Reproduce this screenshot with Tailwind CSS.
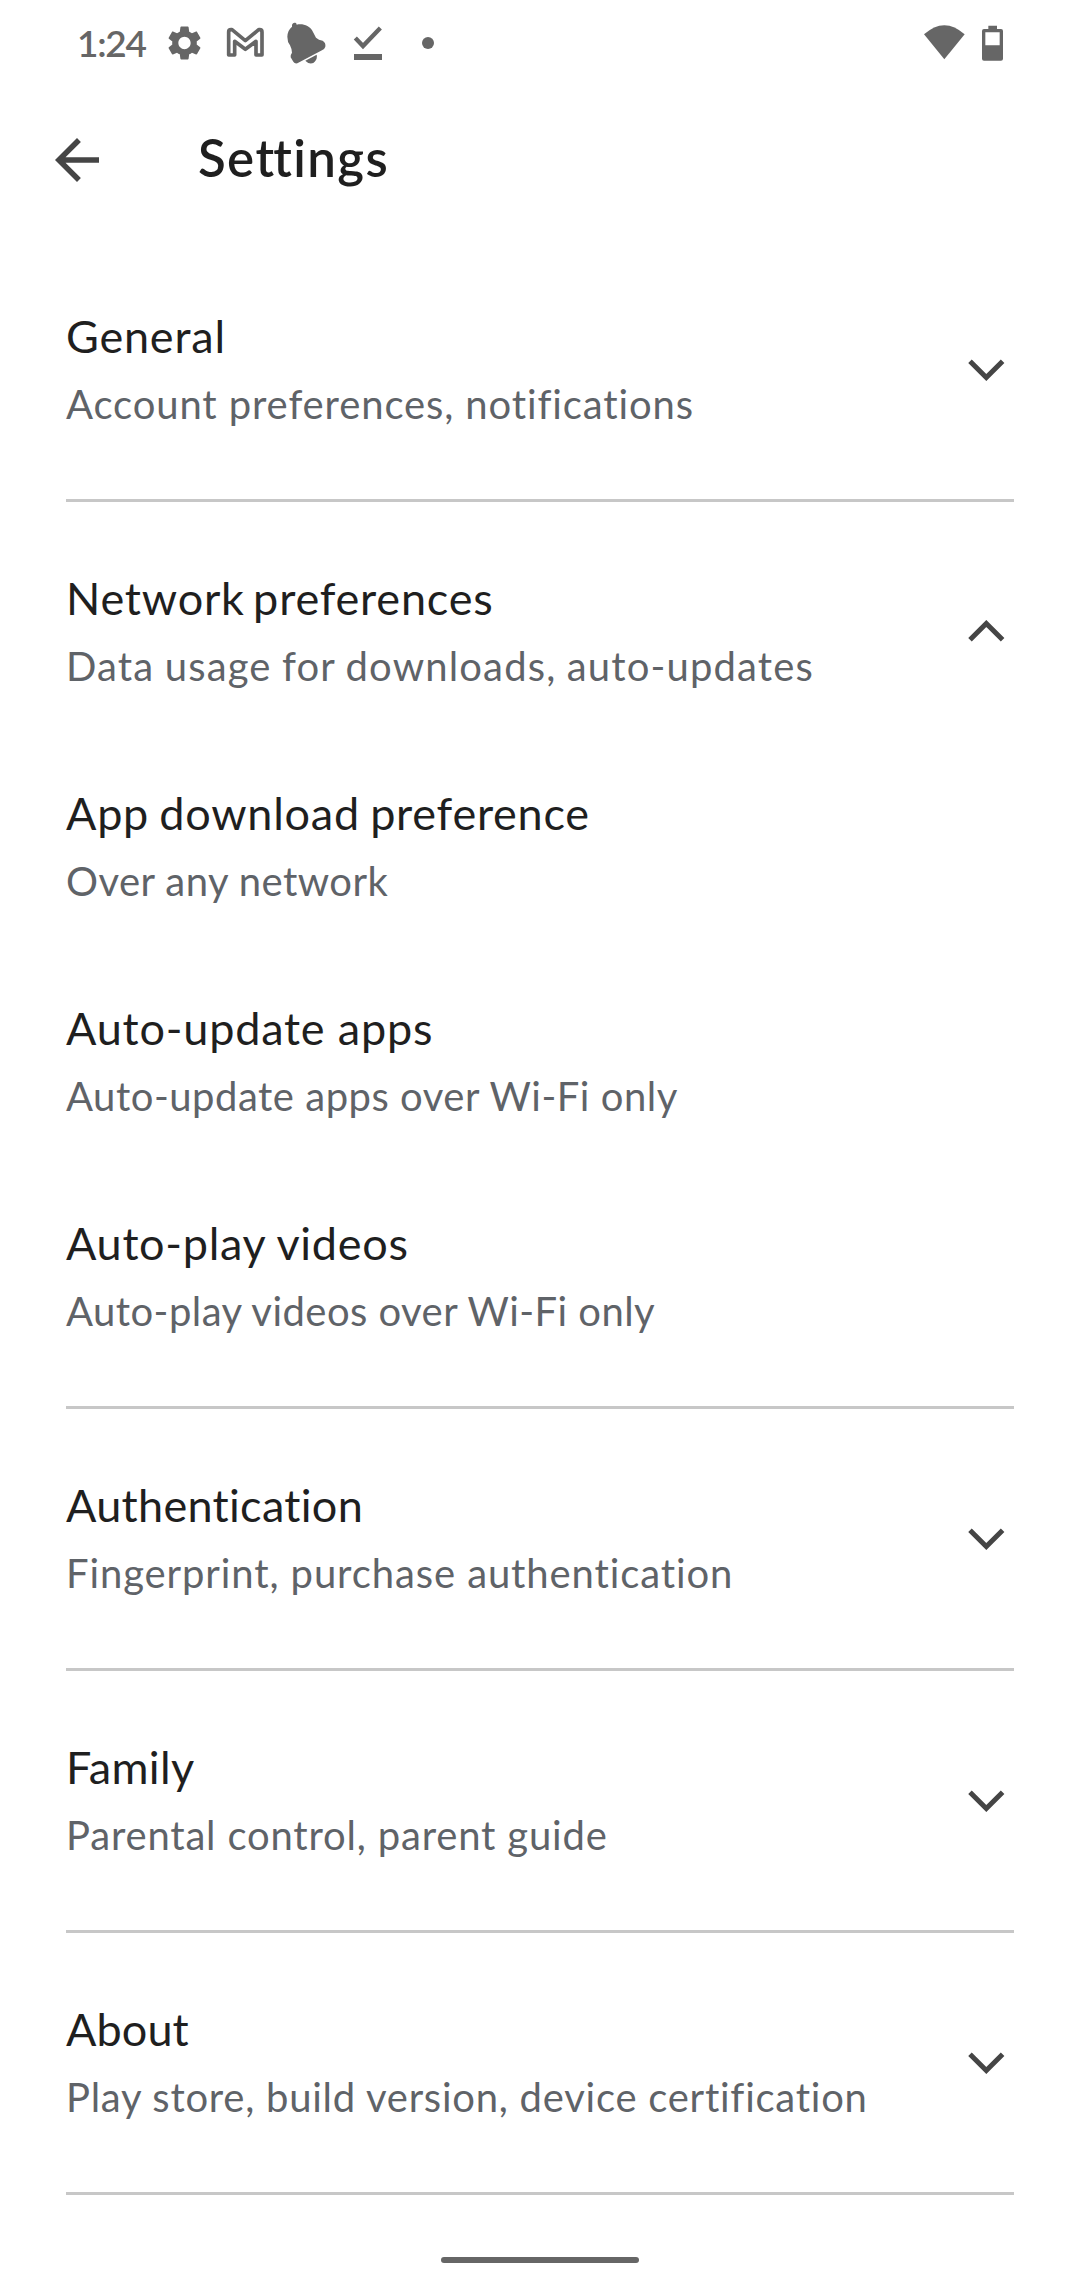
<!DOCTYPE html>
<html lang="en">
<head>
<meta charset="utf-8">
<title>Settings</title>
<script src="https://cdn.jsdelivr.net/npm/@tailwindcss/browser@4"></script>
</head>
<body class="bg-white font-['Lato','Open_Sans',sans-serif] text-[#1f1f1f]">
<div class="flex h-[2280px] w-[1080px] flex-col overflow-hidden">

  <!-- Status bar -->
  <div class="flex h-[86px] items-center pl-[77px] pr-[76px] text-[#666]">
    <span class="w-[87px] text-[37px] leading-[42px] font-semibold tracking-[-1.3px]">1:24</span>
    <svg class="h-[42px] w-[41px]" viewBox="0 0 24 24" fill="currentColor"><path d="M19.14 12.94c.04-.3.06-.61.06-.94 0-.32-.02-.64-.07-.94l2.03-1.58c.18-.14.23-.41.12-.61l-1.92-3.32c-.12-.22-.37-.29-.59-.22l-2.39.96c-.5-.38-1.03-.7-1.62-.94l-.36-2.54c-.04-.24-.24-.41-.48-.41h-3.84c-.24 0-.43.17-.47.41l-.36 2.54c-.59.24-1.13.57-1.62.94l-2.39-.96c-.22-.08-.47 0-.59.22L2.74 8.87c-.12.21-.08.47.12.61l2.03 1.58c-.05.3-.09.63-.09.94s.02.64.07.94l-2.03 1.58c-.18.14-.23.41-.12.61l1.92 3.32c.12.22.37.29.59.22l2.39-.96c.5.38 1.03.7 1.62.94l.36 2.54c.05.24.24.41.48.41h3.84c.24 0 .44-.17.47-.41l.36-2.54c.59-.24 1.13-.56 1.62-.94l2.39.96c.22.08.47 0 .59-.22l1.92-3.32c.12-.22.07-.47-.12-.61l-2.01-1.58zM12 15.6c-1.98 0-3.6-1.62-3.6-3.6s1.62-3.6 3.6-3.6 3.6 1.62 3.6 3.6-1.62 3.6-3.6 3.6z"/></svg>
    <svg class="ml-[21px] h-[42px] w-[39px]" viewBox="48 36 117 126" fill="none" stroke="currentColor" stroke-width="11" stroke-linejoin="round"><path d="M56 135V66q0-7 7-7h3l40 33 40-33h3q7 0 7 7v69H138V94L106 118 74 94v41z"/></svg>
    <svg class="ml-[22px] h-[42px] w-[39px]" viewBox="231 36 117 126" fill="currentColor"><path d="M246 50C244 36 260 36 260 44C280 40 299 48 307 62L318 83Q326 90 338 92Q348 98 346 110Q344 117 336 121L262 160Q254 162 250 155L242 142Q240 136 246 128Q246 118 240 106Q232 96 232 80Q233 60 246 50Z"/><path d="M286 152L320 134Q323 150 310 159Q297 164 286 152Z"/></svg>
    <svg class="ml-[27px] h-[42px] w-[30px]" viewBox="429 36 90 126" fill="currentColor"><path d="M436 84L459 108L511 54" fill="none" stroke="currentColor" stroke-width="13"/><path d="M432 132h84v18h-84z"/></svg>
    <svg class="ml-[38px] h-[42px] w-[14px]" viewBox="633 36 42 126" fill="currentColor"><circle cx="654" cy="99" r="18"/></svg>
    <svg class="ml-auto h-[42px] w-[43px]" viewBox="69 36 129 126" fill="currentColor"><path d="M133 148L72 73Q133 18 194 73Z"/></svg>
    <svg class="ml-[15px] h-[42px] w-[23px]" viewBox="243 36 69 126" fill="currentColor" fill-rule="evenodd"><path d="M265 57V47h26v10h12q6 0 6 6v83q0 6-6 6h-51q-6 0-6-6V63q0-6 6-6zM256 67v39h43V67z"/></svg>
  </div>

  <!-- App bar -->
  <header class="flex h-[148px] items-center pl-[44px]">
    <svg class="h-[66px] w-[66px] text-[#454545]" viewBox="0 0 24 24" fill="currentColor"><path d="M20 11H7.83l5.59-5.59L12 4l-8 8 8 8 1.41-1.41L7.83 13H20v-2z"/></svg>
    <h1 class="ml-[88px] pb-[5px] text-[51px] leading-[66px] font-semibold tracking-[1.4px]">Se<span class="tracking-[-1px]">t</span>tings</h1>
  </header>

  <main class="mt-[6px] px-[66px]">
    <section class="border-b-[3px] border-[#c7c7c7] py-[22px]">
      <div class="flex h-[215px] items-center justify-between">
        <div>
          <h2 class="text-[45px] leading-[64px] tracking-[0.8px]">General</h2>
          <p class="-mb-[2px] pt-[2px] text-[40px] leading-[68px] tracking-[0.88px] text-[#5f6368]">Account preferences, notifications</p>
        </div>
        <svg class="mr-[9px] h-[23px] w-[38px]" viewBox="0 0 38 23" fill="none" stroke="#454545" stroke-width="5"><path d="M3 3.2L19.3 19.5L35.6 3.2"/></svg>
      </div>
    </section>

    <section class="border-b-[3px] border-[#c7c7c7] py-[22px]">
      <div class="flex h-[215px] items-center justify-between">
        <div>
          <h2 class="text-[45px] leading-[64px] tracking-[0.8px] [word-spacing:-4px]">Network preferences</h2>
          <p class="-mb-[2px] pt-[2px] text-[40px] leading-[68px] tracking-[1.15px] [word-spacing:-1px] text-[#5f6368]">Data usage for downloads, auto-updates</p>
        </div>
        <svg class="mr-[9px] h-[23px] w-[38px]" viewBox="0 0 38 23" fill="none" stroke="#454545" stroke-width="5"><path d="M3 19.8L19.3 3.5L35.6 19.8"/></svg>
      </div>
      <div class="flex h-[215px] items-center">
        <div>
          <h2 class="text-[45px] leading-[64px] tracking-[0.75px] [word-spacing:-2px]">App download preference</h2>
          <p class="-mb-[2px] pt-[2px] text-[40px] leading-[68px] tracking-[0.45px] text-[#5f6368]">Over any network</p>
        </div>
      </div>
      <div class="flex h-[215px] items-center">
        <div>
          <h2 class="text-[45px] leading-[64px] tracking-[0.8px]">Auto-update apps</h2>
          <p class="-mb-[2px] pt-[2px] text-[40px] leading-[68px] tracking-[0.52px] text-[#5f6368]">Auto-update apps over Wi-Fi only</p>
        </div>
      </div>
      <div class="flex h-[215px] items-center">
        <div>
          <h2 class="text-[45px] leading-[64px] tracking-[0.7px]">Auto-play videos</h2>
          <p class="-mb-[2px] pt-[2px] text-[40px] leading-[68px] tracking-[0.45px] text-[#5f6368]">Auto-play videos over Wi-Fi only</p>
        </div>
      </div>
    </section>

    <section class="border-b-[3px] border-[#c7c7c7] py-[22px]">
      <div class="flex h-[215px] items-center justify-between">
        <div>
          <h2 class="text-[45px] leading-[64px] tracking-[0.3px]">Authentication</h2>
          <p class="-mb-[2px] pt-[2px] text-[40px] leading-[68px] tracking-[0.9px] text-[#5f6368]">Fingerprint, purchase authentication</p>
        </div>
        <svg class="mr-[9px] h-[23px] w-[38px]" viewBox="0 0 38 23" fill="none" stroke="#454545" stroke-width="5"><path d="M3 3.2L19.3 19.5L35.6 3.2"/></svg>
      </div>
    </section>

    <section class="border-b-[3px] border-[#c7c7c7] py-[22px]">
      <div class="flex h-[215px] items-center justify-between">
        <div>
          <h2 class="text-[45px] leading-[64px] tracking-[0.4px]">Family</h2>
          <p class="-mb-[2px] pt-[2px] text-[40px] leading-[68px] tracking-[0.82px] text-[#5f6368]">Parental control, parent guide</p>
        </div>
        <svg class="mr-[9px] h-[23px] w-[38px]" viewBox="0 0 38 23" fill="none" stroke="#454545" stroke-width="5"><path d="M3 3.2L19.3 19.5L35.6 3.2"/></svg>
      </div>
    </section>

    <section class="border-b-[3px] border-[#c7c7c7] py-[22px]">
      <div class="flex h-[215px] items-center justify-between">
        <div>
          <h2 class="text-[45px] leading-[64px] tracking-[0.1px]">About</h2>
          <p class="-mb-[2px] pt-[2px] text-[40px] leading-[68px] tracking-[0.75px] text-[#5f6368]">Play store, build version, device certification</p>
        </div>
        <svg class="mr-[9px] h-[23px] w-[38px]" viewBox="0 0 38 23" fill="none" stroke="#454545" stroke-width="5"><path d="M3 3.2L19.3 19.5L35.6 3.2"/></svg>
      </div>
    </section>
  </main>

  <!-- Gesture handle -->
  <div class="mt-auto mb-[17px] h-[6px] w-[198px] shrink-0 self-center rounded-full bg-[#666]"></div>
</div>
</body>
</html>
